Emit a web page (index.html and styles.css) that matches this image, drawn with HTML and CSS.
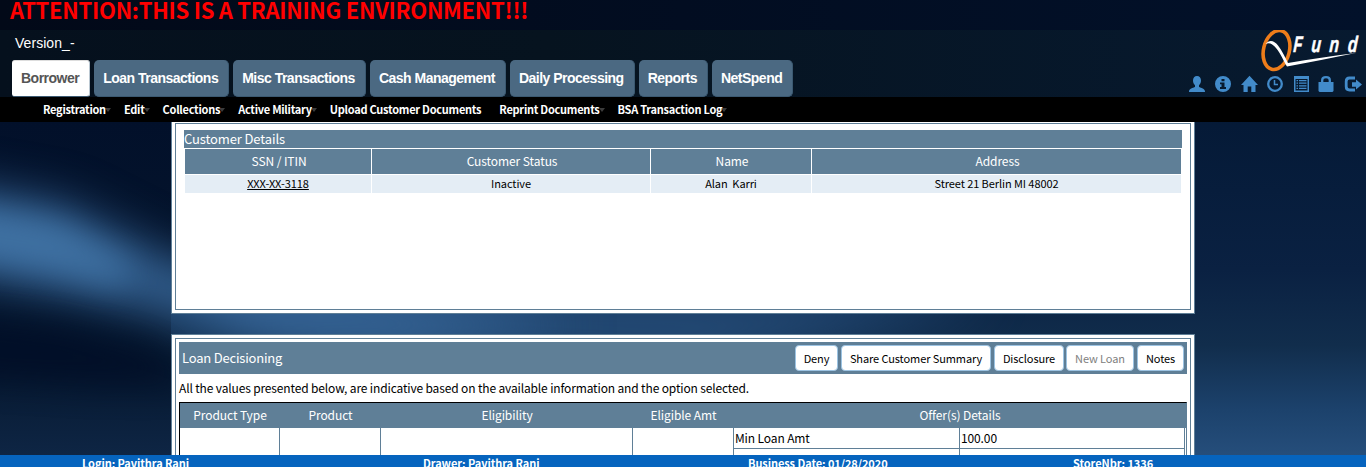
FILE: index.html
```html
<!DOCTYPE html>
<html lang="en">
<head>
<meta charset="utf-8">
<title>QFund</title>
<link rel="stylesheet" href="styles.css">
</head>
<body>
<div class="app">
  <svg class="backdrop" width="1366" height="467" viewBox="0 0 1366 467">
    <defs>
      <filter id="soft" x="-50%" y="-100%" width="200%" height="300%" color-interpolation-filters="sRGB"><feGaussianBlur stdDeviation="24"/></filter>
      <filter id="mid" x="-50%" y="-100%" width="200%" height="300%" color-interpolation-filters="sRGB"><feGaussianBlur stdDeviation="16"/></filter>
    </defs>
    <path d="M200 270L500 280L1000 300L700 370L300 350Z" fill="#28517f" filter="url(#soft)" opacity=".8"/>
    <path d="M-80 180L60 205L180 265L400 295L580 325L400 355L250 345L150 310L-80 265Z" fill="#356394" filter="url(#soft)"/>
    <path d="M-60 205L60 225L130 265L120 285L60 270L-60 250Z" fill="#4478aa" filter="url(#mid)" opacity=".75"/>
    <path d="M-60 315L60 327L150 350L190 385L100 385L-60 375Z" fill="#010e27" filter="url(#mid)" opacity=".9"/>
  </svg>
  <div class="notice">ATTENTION:THIS IS A TRAINING ENVIRONMENT!!!</div>
  <header class="header">
    <div class="header-left">
      <div class="version">Version_-</div>
      <nav class="tabs">
        <a class="tab tab-active">Borrower</a>
        <a class="tab">Loan Transactions</a>
        <a class="tab">Misc Transactions</a>
        <a class="tab">Cash Management</a>
        <a class="tab">Daily Processing</a>
        <a class="tab">Reports</a>
        <a class="tab">NetSpend</a>
      </nav>
    </div>
    <div class="header-right">
      <svg class="logo" width="106" height="43" viewBox="0 0 106 43">
        <ellipse cx="16.500" cy="20" rx="12.900" ry="19.800" transform="rotate(14 16.5 20)" fill="none" stroke="#ee7d1a" stroke-width="3.6"/>
        <path d="M5.500 14C9 9.500 14 10 18 15.500C22 20.500 25 27 28 33C50 29 72 26 96 23C72 28 50 32 27 36.500C24 32 21 24 16 18C12 13 9 12.500 5.500 14Z" fill="#fff"/>
        <g class="logo-text">
          <text transform="translate(33 22) skewX(-4) scale(.66 1)">F</text>
          <text transform="translate(51 22) skewX(-4) scale(.7 1)">u</text>
          <text transform="translate(69 22) skewX(-4) scale(.7 1)">n</text>
          <text transform="translate(87.500 22) skewX(-4) scale(.7 1)">d</text>
        </g>
      </svg>
      <div class="icons">
        <svg viewBox="0 0 16 16"><path d="M8 0C5.500 0 4 1.800 4 4.500C4 6.500 4.800 8.200 6 9.200V11C4 12 0 12.500 0 15.500V16H16V15.500C16 12.500 12 12 10 11V9.200C11.200 8.200 12 6.500 12 4.500C12 1.800 10.500 0 8 0Z"/></svg>
        <svg viewBox="0 0 16 16"><path fill-rule="evenodd" d="M8 0A8 8 0 1 0 8 16A8 8 0 1 0 8 0ZM6.500 3H9.500V5.200H6.500ZM5 6.500H9.500V11H11V13H5V11H6.500V8.300H5Z"/></svg>
        <svg viewBox="0 0 16 16"><path d="M8.500 -.3L17 9H14.500V16H10.300V10.500H6.700V16H2.500V9H0Z"/></svg>
        <svg viewBox="0 0 16 16"><circle cx="8" cy="8" r="6.800" class="line"/><path d="M7.500 4V8.500H11" class="line thin"/></svg>
        <svg viewBox="0 0 16 16"><path fill-rule="evenodd" d="M1 0H16V16H1ZM2.500 3V14.500H14.500V3ZM3.500 4H5V5.200H3.500ZM6 4H13.500V5.200H6ZM3.500 6.600H5V7.800H3.500ZM6 6.600H13.500V7.800H6ZM3.500 9.200H5V10.400H3.500ZM6 9.200H13.500V10.400H6ZM3.500 11.800H5V13H3.500ZM6 11.800H13.500V13H6Z"/></svg>
        <svg viewBox="0 0 16 16"><path d="M-.5 6H14.500V15L13.500 16H.5L-.5 15Z"/><path d="M3.200 7V4Q3.200 1.200 7 1.200Q10.800 1.200 10.800 4V7" class="line"/></svg>
        <svg viewBox="0 0 16 16"><path d="M10 2H4.500Q1.200 2 1.200 5.500V10.500Q1.200 14 4.500 14H10" class="line wide"/><path d="M7 6.300H11V3.500L17 8.500L11 13.500V10.700H7Z"/></svg>
      </div>
    </div>
  </header>
  <nav class="menu">
    <a class="menu-item has-caret">Registration</a>
    <a class="menu-item has-caret">Edit</a>
    <a class="menu-item has-caret">Collections</a>
    <a class="menu-item has-caret">Active Military</a>
    <a class="menu-item">Upload Customer Documents</a>
    <a class="menu-item has-caret">Reprint Documents</a>
    <a class="menu-item has-caret">BSA Transaction Log</a>
  </nav>
  <main class="content">
    <section class="panel panel-customer">
      <div class="panel-inner customer-inner">
        <h2 class="customer-title">Customer Details</h2>
        <div class="customer-grid">
          <div class="th">SSN / ITIN</div><div class="th">Customer Status</div><div class="th">Name</div><div class="th">Address</div>
          <div class="td"><a class="ssn">XXX-XX-3118</a></div><div class="td">Inactive</div><div class="td">Alan&nbsp; Karri</div><div class="td">Street 21 Berlin MI 48002</div>
        </div>
      </div>
    </section>
    <section class="panel panel-loan">
      <div class="panel-inner loan-inner">
        <div class="loan-bar">
          <h2 class="loan-title">Loan Decisioning</h2>
          <div class="actions">
            <button class="btn btn-deny">Deny</button>
            <button class="btn btn-share">Share Customer Summary</button>
            <button class="btn btn-disclosure">Disclosure</button>
            <button class="btn btn-new" disabled>New Loan</button>
            <button class="btn btn-notes">Notes</button>
          </div>
        </div>
        <p class="loan-note">All the values presented below, are indicative based on the available information and the option selected.</p>
        <div class="loan-table">
          <div class="loan-row loan-head"><div>Product Type</div><div>Product</div><div>Eligibility</div><div>Eligible Amt</div><div>Offer(s) Details</div></div>
          <div class="loan-row loan-body"><div></div><div></div><div></div><div></div>
            <div class="offers"><div>Min Loan Amt</div><div>100.00</div><div></div><div></div></div>
          </div>
        </div>
      </div>
    </section>
  </main>
  <footer class="footer">
    <span>Login: Pavithra Rani</span><span>Drawer: Pavithra Rani</span><span>Business Date: 01/28/2020</span><span>StoreNbr: 1336</span>
  </footer>
</div>
</body>
</html>
```
FILE: styles.css
```css
* { box-sizing: border-box; }
body { margin: 0; font-family: "Noto Sans CJK SC", sans-serif; font-size: 12px; color: #000; overflow: hidden; }
.app {
  position: relative; isolation: isolate;
  height: 467px; display: flex; flex-direction: column; overflow: hidden;
  background: linear-gradient(180deg, #010c20 0, #051a37 125px, #071d3c 190px, #0a2142 270px, #112d4c 345px, #1c426c 410px, #28517f 467px);
}
.app::before { content: ""; position: absolute; z-index: -2; inset: 122px auto 0 0; width: 171px; background: linear-gradient(180deg, #02102a, #06182f 70%, #0f2747); }
.backdrop { position: absolute; z-index: -1; inset: 0; }
.notice { height: 30px; flex: none; padding-left: 10px; font-size: 22px; line-height: 19px; font-weight: 700; letter-spacing: -.28px; color: #f00; white-space: nowrap; background: linear-gradient(90deg, #020918, #02112a); }
.header { height: 67px; flex: none; display: flex; justify-content: space-between; background: linear-gradient(90deg, #05101d, #06131f 40%, #071a30); }
.version { height: 30px; padding: 5px 0 0 15px; font: 14px/16px "Liberation Sans", sans-serif; letter-spacing: .05px; color: #fff; }
.tabs { display: flex; gap: 4px; padding-left: 12px; }
.tab { height: 37px; padding: 0 10px 0 9px; border-radius: 5px; border-right: 1px solid #3b5971; border-bottom: 1px solid #3b5971; background: #4b6982; color: #fff; font: bold 14px/36px "Liberation Sans", sans-serif; letter-spacing: -.51px; white-space: nowrap; }
.tab-active { background: #fff; color: #555; border-top: 1px solid #ddd; border-right: 1px solid #bbc8d2; border-radius: 3px; line-height: 35px; }
.header-right { width: 180px; display: flex; flex-direction: column; align-items: flex-end; }
.logo { display: block; height: 43px; flex: none; overflow: hidden; }
.logo-text { font: italic bold 22.5px "Liberation Sans", sans-serif; fill: #fff; stroke: #fff; stroke-width: .5; }
.icons { display: flex; justify-content: flex-end; gap: 10px; padding: 3px 5px 0 0; }
.icons svg { width: 16px; height: 16px; fill: #428bca; overflow: visible; }
.icons .line { fill: none; stroke: #428bca; stroke-width: 2.3; }
.icons .thin { stroke-width: 1.5; }
.icons .wide { stroke-width: 2.8; }
.menu { height: 25px; flex: none; display: flex; gap: 18px; padding-left: 43px; background: #000; }
.menu-item { position: relative; color: #fff; font-weight: 700; font-size: 11px; letter-spacing: -.26px; line-height: 25px; white-space: nowrap; }
.has-caret::after { content: ""; position: absolute; z-index: -1; top: 11px; right: -5px; border: 3px solid transparent; border-top: 4px solid #3c3c3c; border-bottom: 0; }
.menu { isolation: isolate; }
.content { flex: 1; min-height: 0; overflow: hidden; padding-left: 171px; }
.panel { width: 1024px; border: 1px solid #5f7f97; padding: 3px; background: #fff; }
.panel-inner { border: 1px solid #5f7f97; height: 100%; }
.panel-customer { height: 192px; border-top: 0; padding-top: 1px; }
.customer-inner { padding: 6px 8px; }
.customer-title { margin: 0 0 1px; height: 18px; font-size: 13px; line-height: 18px; letter-spacing: -.12px; font-weight: 400; color: #fff; background: #5f7f97; width: 998px; }
.customer-grid { display: grid; grid-template-columns: 186px 278px 160px 369px; grid-template-rows: 25px 18px; gap: 1px; margin-left: 1px; text-align: center; }
.th { padding-left: 2px; background: #5f7f97; color: #fff; font-size: 12px; line-height: 24px; letter-spacing: -.08px; }
.td { background: #e4edf5; font-size: 11px; line-height: 17px; letter-spacing: -.08px; }
.ssn { text-decoration: underline; }
.panel-loan { height: 300px; margin-top: 20px; }
.loan-inner { padding: 3px; }
.loan-bar { width: 1008px; height: 32px; display: flex; justify-content: space-between; align-items: center; padding: 0 3px; background: #5f7f97; color: #fff; }
.loan-title { margin: 0; font-size: 13px; font-weight: 400; line-height: 32px; letter-spacing: -.2px; }
.actions { display: flex; gap: 3px; }
.btn { height: 26px; padding: 0; border: 1px solid #9cc3e2; border-radius: 4px; background: #fff; color: #000; font-family: inherit; font-size: 11px; line-height: 22px; letter-spacing: -.1px; white-space: nowrap; }
.btn:disabled { color: #808080; }
.btn-deny { width: 43px; }
.btn-share { width: 150px; }
.btn-disclosure { width: 70px; }
.btn-new { width: 68px; margin-left: -1px; }
.btn-notes { width: 47px; }
.loan-note { margin: 0; height: 28px; font-size: 12px; line-height: 28px; letter-spacing: -.145px; white-space: nowrap; }
.loan-table { width: 1008px; border-top: 1px solid #000; border-left: 1px solid #000; border-right: 1px solid #5f7f97; }
.loan-row { display: grid; grid-template-columns: 100px 101px 252px 101px 1fr; }
.loan-head { height: 25px; background: #5f7f97; color: #fff; text-align: center; font-size: 12px; line-height: 24px; letter-spacing: -.08px; }
.loan-body { height: 100px; padding-right: 1px; }
.loan-body > div { border-right: 1px solid #5f7f97; }
.offers { display: grid; grid-template-columns: 226px 1fr; grid-template-rows: 21px 21px; line-height: 20px; letter-spacing: -.12px; }
.offers > div { padding-left: 1px; border-bottom: 1px solid #5f7f97; }
.offers > div:nth-child(odd) { border-right: 1px solid #5f7f97; }
.footer { height: 12px; flex: none; overflow: hidden; display: grid; grid-template-columns: 341px 325px 325px 1fr; padding-left: 82px; background: #0664be; color: #fff; font-size: 11px; font-weight: 700; line-height: 17px; letter-spacing: -.08px; }
```
